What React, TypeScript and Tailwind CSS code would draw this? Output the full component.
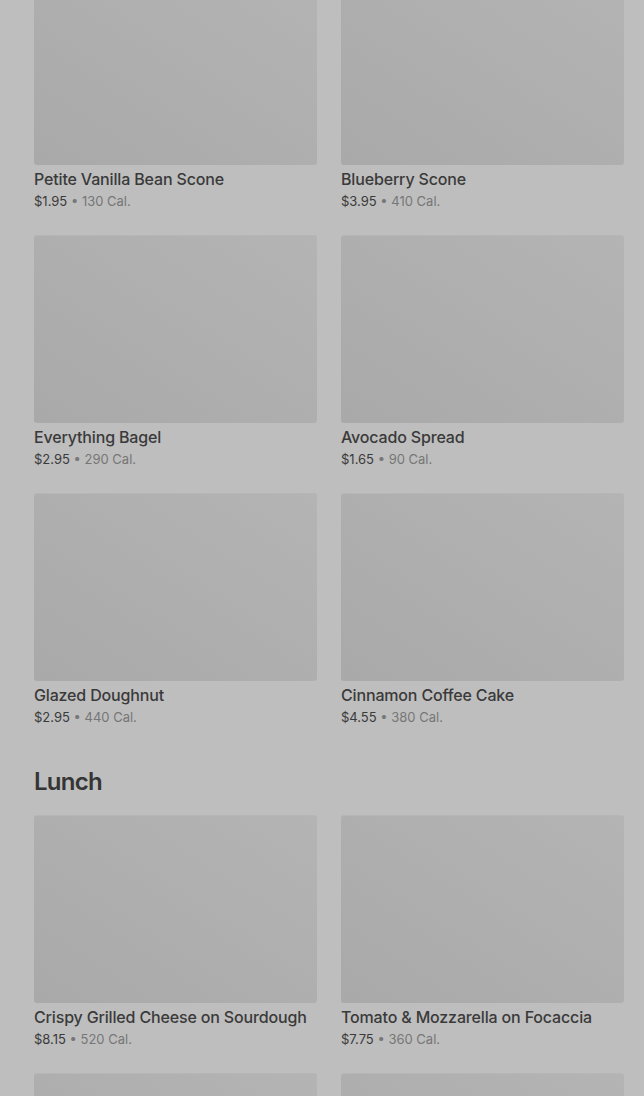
import React from "react";

type Item = { name: string; price: string; cal: string };

const breakfast: Item[] = [
  { name: "Petite Vanilla Bean Scone", price: "$1.95", cal: "130 Cal." },
  { name: "Blueberry Scone", price: "$3.95", cal: "410 Cal." },
  { name: "Everything Bagel", price: "$2.95", cal: "290 Cal." },
  { name: "Avocado Spread", price: "$1.65", cal: "90 Cal." },
  { name: "Glazed Doughnut", price: "$2.95", cal: "440 Cal." },
  { name: "Cinnamon Coffee Cake", price: "$4.55", cal: "380 Cal." },
];

const lunch: Item[] = [
  { name: "Crispy Grilled Cheese on Sourdough", price: "$8.15", cal: "520 Cal." },
  { name: "Tomato & Mozzarella on Focaccia", price: "$7.75", cal: "360 Cal." },
];

function Thumb() {
  return (
    <div className="h-[188px] w-full rounded-[3px] border-t border-[#b6b6b6] bg-gradient-to-tr from-[#a9a9a9] to-[#b4b4b4]" />
  );
}

function Card({ item }: { item: Item }) {
  return (
    <div className="flex flex-col">
      <Thumb />
      <div className="mt-1 text-[16px] leading-5 font-medium tracking-[-0.01em] text-[#3a3a3a] whitespace-nowrap">
        {item.name}
      </div>
      <div className="mt-1 text-[13px] leading-4 text-[#3a3a3a]">
        <span>{item.price}</span>
        <span className="text-[#767676]"> • {item.cal}</span>
      </div>
    </div>
  );
}

export default function App() {
  return (
    <div
      className="h-[1096px] w-full overflow-hidden bg-[#bebebe] pl-[34px] pr-[20px]"
      style={{ fontFamily: "Inter, 'Noto Sans', sans-serif" }}
    >
      <div className="-mt-[23px] grid grid-cols-2 gap-x-6 gap-y-[26px]">
        {breakfast.map((it) => (
          <Card key={it.name} item={it} />
        ))}
      </div>
      <h2 className="mt-[41px] mb-[17px] text-[24px] leading-8 font-semibold tracking-[-0.03em] text-[#353535]">
        Lunch
      </h2>
      <div className="grid grid-cols-2 gap-x-6 gap-y-[26px]">
        {lunch.map((it) => (
          <Card key={it.name} item={it} />
        ))}
        <Thumb />
        <Thumb />
      </div>
    </div>
  );
}
